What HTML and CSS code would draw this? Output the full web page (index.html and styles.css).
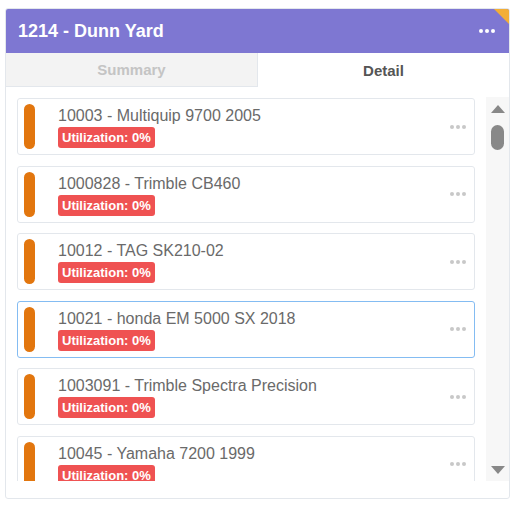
FILE: index.html
```html
<!DOCTYPE html>
<html lang="en">
<head>
    <meta charset="UTF-8">
    <meta name="viewport" content="width=device-width, initial-scale=1.0">
    <title>1214 - Dunn Yard</title>
    <link rel="stylesheet" href="styles.css">
</head>
<body>
    <div class="panel">
        <div class="header">
            <div class="title">1214 - Dunn Yard</div>
            <div class="menu-dots"><span></span><span></span><span></span></div>
            <div class="corner"></div>
        </div>
        <div class="tabs">
            <div class="tab">Summary</div>
            <div class="tab active">Detail</div>
        </div>
        <div class="list-wrap">
            <div class="list">
                <div class="item">
                    <div class="bar"></div>
                    <div class="info">
                        <div class="name">10003 - Multiquip 9700 2005</div>
                        <span class="badge">Utilization: 0%</span>
                    </div>
                    <div class="item-dots"><span></span><span></span><span></span></div>
                </div>
                <div class="item">
                    <div class="bar"></div>
                    <div class="info">
                        <div class="name">1000828 - Trimble CB460</div>
                        <span class="badge">Utilization: 0%</span>
                    </div>
                    <div class="item-dots"><span></span><span></span><span></span></div>
                </div>
                <div class="item">
                    <div class="bar"></div>
                    <div class="info">
                        <div class="name">10012 - TAG SK210-02</div>
                        <span class="badge">Utilization: 0%</span>
                    </div>
                    <div class="item-dots"><span></span><span></span><span></span></div>
                </div>
                <div class="item selected">
                    <div class="bar"></div>
                    <div class="info">
                        <div class="name">10021 - honda EM 5000 SX 2018</div>
                        <span class="badge">Utilization: 0%</span>
                    </div>
                    <div class="item-dots"><span></span><span></span><span></span></div>
                </div>
                <div class="item">
                    <div class="bar"></div>
                    <div class="info">
                        <div class="name">1003091 - Trimble Spectra Precision</div>
                        <span class="badge">Utilization: 0%</span>
                    </div>
                    <div class="item-dots"><span></span><span></span><span></span></div>
                </div>
                <div class="item">
                    <div class="bar"></div>
                    <div class="info">
                        <div class="name">10045 - Yamaha 7200 1999</div>
                        <span class="badge">Utilization: 0%</span>
                    </div>
                    <div class="item-dots"><span></span><span></span><span></span></div>
                </div>
            </div>
            <div class="scrollbar">
                <div class="arrow-up"></div>
                <div class="thumb"></div>
                <div class="track"></div>
                <div class="arrow-down"></div>
            </div>
        </div>
    </div>
</body>
</html>
```

FILE: styles.css
```css
body {
    margin: 0;
    padding: 0;
    background-color: #fff;
    font-family: "Liberation Sans", Arial, sans-serif;
}

.panel {
    margin: 8px 0 0 5px;
    width: 503px;
    height: 489px;
    border: 1px solid #e3e7ec;
    border-radius: 3px;
    display: flex;
    flex-direction: column;
    overflow: hidden;
}

.header {
    position: relative;
    background-color: #7e77d2;
    height: 44px;
    display: flex;
    align-items: center;
    justify-content: space-between;
    padding: 0 14px 0 12px;
}

.title {
    color: #fff;
    font-size: 18px;
    font-weight: bold;
}

.menu-dots {
    display: flex;
    gap: 2px;
}

.menu-dots span {
    width: 4px;
    height: 4px;
    border-radius: 50%;
    background-color: #fff;
}

.corner {
    position: absolute;
    top: 0;
    right: 0;
    width: 0;
    height: 0;
    border-top: 15px solid #f2ae37;
    border-left: 15px solid transparent;
}

.tabs {
    display: flex;
    height: 34px;
}

.tab {
    flex: 1;
    display: flex;
    align-items: center;
    justify-content: center;
    font-size: 15px;
    font-weight: bold;
    color: #c4c4c4;
    background-color: #f3f3f3;
    border-bottom: 1px solid #e3e7ec;
    border-right: 1px solid #e3e7ec;
}

.tab.active {
    color: #555;
    background-color: #fff;
    border-bottom: none;
    border-right: none;
}

.list-wrap {
    display: flex;
    height: 394px;
    padding: 0 0 0 11px;
}

.list {
    flex: 1;
    overflow: hidden;
    padding: 11px 11px 0 0;
    display: flex;
    flex-direction: column;
    gap: 10.6px;
}

.item {
    flex-shrink: 0;
    height: 55px;
    border: 1px solid #e3e7ec;
    border-radius: 3px;
    display: flex;
    align-items: center;
    padding: 0 8px 0 6px;
}

.item.selected {
    border-color: #84bcf2;
}

.bar {
    width: 11px;
    height: 45px;
    border-radius: 6px;
    background-color: #e2760e;
}

.info {
    flex: 1;
    padding-left: 23px;
    padding-top: 1px;
    display: flex;
    flex-direction: column;
    align-items: flex-start;
    gap: 2px;
}

.name {
    font-size: 16px;
    color: #6a6a6a;
    line-height: 19px;
}

.badge {
    background-color: #ef5252;
    color: #fff;
    font-size: 13px;
    font-weight: bold;
    line-height: 21px;
    padding: 0 4px;
    border-radius: 3px;
}

.item-dots {
    display: flex;
    gap: 2px;
}

.item-dots span {
    width: 4px;
    height: 4px;
    border-radius: 50%;
    background-color: #c8c8c8;
}

.scrollbar {
    width: 23px;
    margin-top: 10px;
    background-color: #f7f7f7;
    display: flex;
    flex-direction: column;
    align-items: center;
    padding: 8px 0 7px;
}

.arrow-up {
    width: 0;
    height: 0;
    border-left: 7px solid transparent;
    border-right: 7px solid transparent;
    border-bottom: 8px solid #888;
}

.thumb {
    margin-top: 12px;
    width: 13px;
    height: 25px;
    border-radius: 7px;
    background-color: #888;
}

.track {
    flex: 1;
}

.arrow-down {
    width: 0;
    height: 0;
    border-left: 7px solid transparent;
    border-right: 7px solid transparent;
    border-top: 8px solid #888;
}
```
